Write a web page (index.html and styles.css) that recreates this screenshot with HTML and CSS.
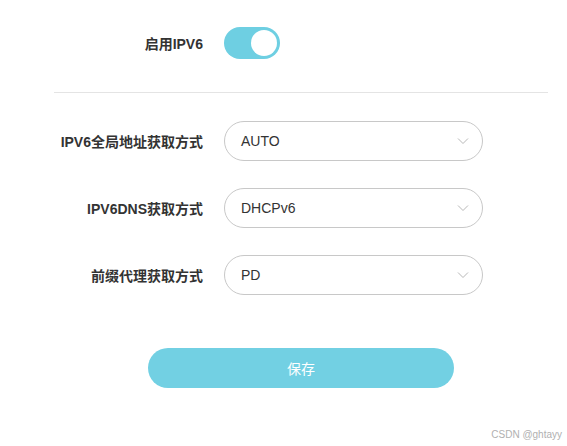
FILE: index.html
```html
<!DOCTYPE html>
<html lang="zh">
<head>
<meta charset="utf-8">
<link rel="stylesheet" href="styles.css">
</head>
<body>
<div class="page">
  <div class="row toggle-row">
    <div class="label">启用IPV6</div>
    <div class="switch"><span class="knob"></span></div>
  </div>
  <div class="divider"></div>
  <div class="form">
    <div class="row">
      <div class="label">IPV6全局地址获取方式</div>
      <div class="select"><span>AUTO</span><svg class="chev" width="12" height="8" viewBox="0 0 12 8"><path d="M1 1.5 L6 6.5 L11 1.5" fill="none" stroke="#b8b8b8" stroke-width="1"/></svg></div>
    </div>
    <div class="row">
      <div class="label">IPV6DNS获取方式</div>
      <div class="select"><span>DHCPv6</span><svg class="chev" width="12" height="8" viewBox="0 0 12 8"><path d="M1 1.5 L6 6.5 L11 1.5" fill="none" stroke="#b8b8b8" stroke-width="1"/></svg></div>
    </div>
    <div class="row">
      <div class="label">前缀代理获取方式</div>
      <div class="select"><span>PD</span><svg class="chev" width="12" height="8" viewBox="0 0 12 8"><path d="M1 1.5 L6 6.5 L11 1.5" fill="none" stroke="#b8b8b8" stroke-width="1"/></svg></div>
    </div>
  </div>
  <div class="actions">
    <button class="save">保存</button>
  </div>
  <div class="watermark">CSDN @ghtayy</div>
</div>
</body>
</html>
```
FILE: styles.css
```css
html, body {
  margin: 0;
  padding: 0;
  background: #fff;
}
body {
  font-family: "Liberation Sans", Arial, "Noto Sans CJK SC", sans-serif;
  color: #333;
}
.page {
  width: 567px;
  height: 446px;
  position: relative;
  padding-top: 27px;
  box-sizing: border-box;
}
.row {
  display: grid;
  grid-template-columns: 150px 259px;
  column-gap: 21px;
  align-items: center;
  padding-left: 53px;
}
.label {
  text-align: right;
  font-size: 14px;
  font-weight: bold;
  color: #333;
}
.switch {
  width: 56px;
  height: 32px;
  border-radius: 16px;
  background: #6ecfe2;
  display: flex;
  align-items: center;
  justify-content: flex-end;
  padding-right: 3px;
  box-sizing: border-box;
}
.knob {
  width: 26px;
  height: 26px;
  border-radius: 50%;
  background: #fff;
}
.divider {
  height: 1px;
  background: #e4e4e4;
  margin: 33px 19px 0 54px;
}
.form {
  display: flex;
  flex-direction: column;
  gap: 27px;
  margin-top: 28px;
}
.select {
  height: 40px;
  border: 1px solid #c8c8c8;
  border-radius: 20px;
  box-sizing: border-box;
  display: flex;
  align-items: center;
  justify-content: space-between;
  padding: 0 13px 0 16px;
  font-size: 14px;
  color: #333;
}
.chev {
  display: block;
}
.actions {
  display: flex;
  padding-left: 148px;
  margin-top: 53px;
}
.save {
  width: 306px;
  height: 40px;
  border: none;
  border-radius: 20px;
  background: #72d0e3;
  color: #fff;
  font-size: 14px;
  font-family: "Liberation Sans", Arial, "Noto Sans CJK SC", sans-serif;
}
.watermark {
  position: absolute;
  right: 5px;
  bottom: 6px;
  font-size: 10px;
  color: #b0b0b0;
  font-family: "Liberation Sans", Arial, sans-serif;
}
```
